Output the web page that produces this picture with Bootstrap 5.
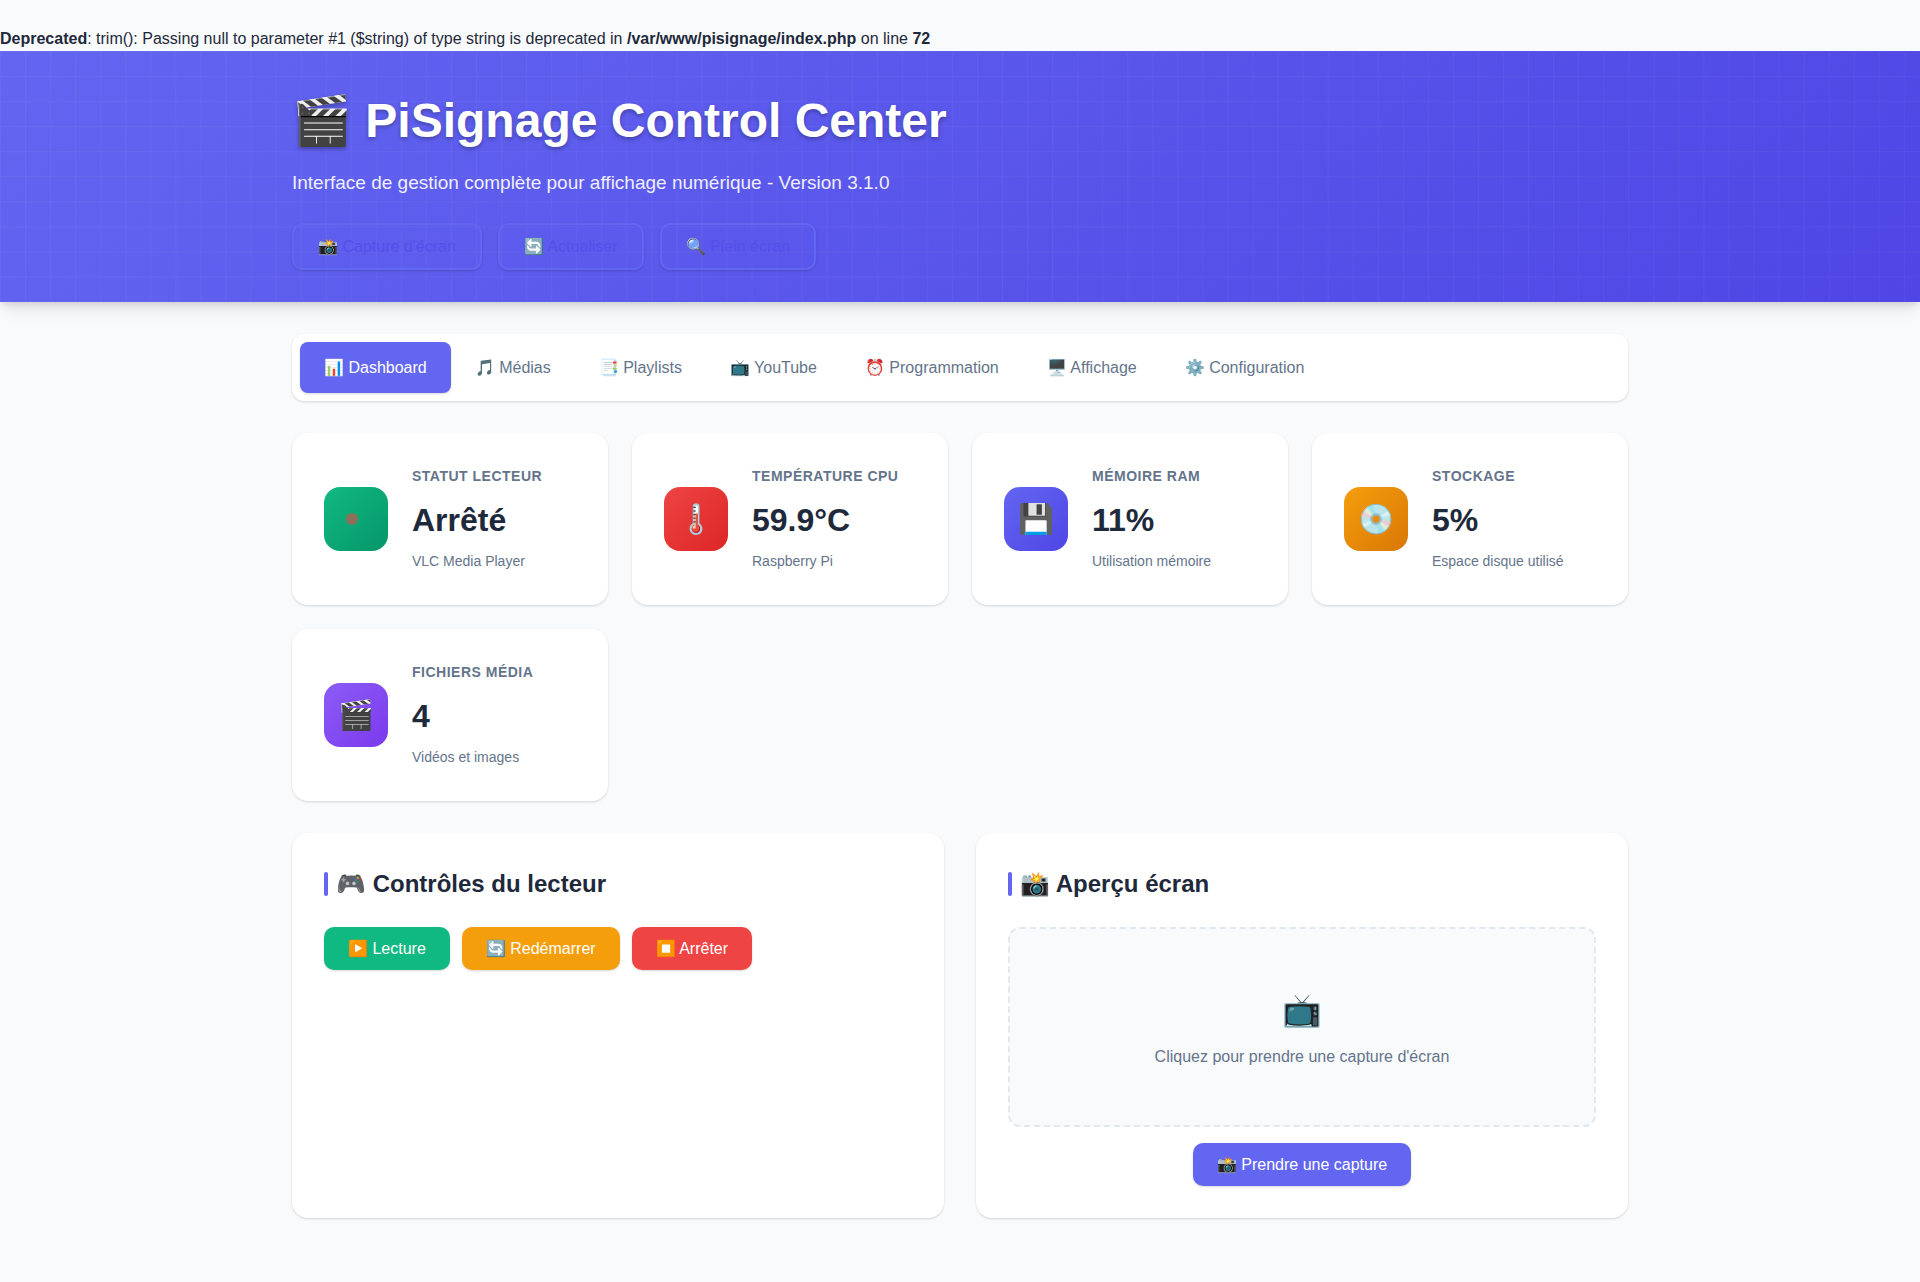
<!DOCTYPE html>
<html lang="fr">
<head>
<meta charset="utf-8">
<meta name="viewport" content="width=device-width, initial-scale=1">
<title>PiSignage Control Center</title>
<link href="https://cdn.jsdelivr.net/npm/bootstrap@5.3.0/dist/css/bootstrap.min.css" rel="stylesheet">
<style>
:root {
  --pi-primary: #6366f1;
  --pi-primary-dark: #4f46e5;
  --pi-text: #1e293b;
  --pi-muted: #64748b;
  --pi-shadow: 0 1px 3px rgba(0,0,0,.1), 0 1px 2px rgba(0,0,0,.06);
}
body { font-family: "Liberation Sans", Arial, sans-serif; font-size: 16px; line-height: 25px; color: var(--pi-text); background: #f9fafc; }
.php-notice { padding-top: 26px; }
.wrap { max-width: 1400px; padding: 0 32px; }
.site-header {
  padding: 32px 0;
  background:
    url("data:image/svg+xml,%3Csvg xmlns='http://www.w3.org/2000/svg' viewBox='0 0 200 200'%3E%3Cdefs%3E%3Cpattern id='g' width='10' height='10' patternUnits='userSpaceOnUse'%3E%3Cpath d='M10 0H0V10' fill='none' stroke='white' stroke-opacity='.04' stroke-width='.8'/%3E%3C/pattern%3E%3C/defs%3E%3Crect width='200' height='200' fill='url(%23g)'/%3E%3C/svg%3E") 0 0 / 501px,
    linear-gradient(135deg, var(--pi-primary), var(--pi-primary-dark));
  box-shadow: 0 10px 15px -3px rgba(0,0,0,.1), 0 4px 6px -2px rgba(0,0,0,.1);
}
.site-header h1 { font-size: 48px; line-height: 75px; font-weight: 700; text-shadow: 0 2px 4px rgba(0,0,0,.3); }
.tagline { font-size: 19px; line-height: 33px; opacity: .9; }
.btn { --bs-btn-padding-x: 24px; --bs-btn-padding-y: 12px; --bs-btn-border-width: 0; --bs-btn-border-radius: 10px; --bs-btn-line-height: 19px; --bs-btn-color: #fff; --bs-btn-hover-color: #fff; box-shadow: var(--pi-shadow); }
.btn-ghost { --bs-btn-border-width: 2px; --bs-btn-border-color: var(--pi-primary); --bs-btn-color: #5350e9; }
.btn-play { background: #10b981; }
.btn-restart { background: #f59e0b; }
.btn-stop { background: #ef4444; }
.btn-capture { background: var(--pi-primary); }
.main-area { padding-top: 32px; padding-bottom: 64px; }
.tabs { padding: 8px; margin-bottom: 32px; background: #fff; border-radius: 12px; box-shadow: var(--pi-shadow); }
.tabs .nav-link { padding: 16px 24px; line-height: 19px; color: var(--pi-muted); border-radius: 8px; }
.tabs .nav-link.active { color: #fff; background: var(--pi-primary); box-shadow: var(--pi-shadow); }
.panel { padding: 32px; background: #fff; border: 0; border-radius: 16px; box-shadow: var(--pi-shadow); }
.stat { flex-direction: row; align-items: center; gap: 24px; }
.stat-icon { width: 64px; height: 64px; border-radius: 16px; font-size: 29px; line-height: 46px; }
.icon-green { background: linear-gradient(135deg, #10b981, #059669); }
.icon-red { background: linear-gradient(135deg, #ef4444, #dc2626); }
.icon-indigo { background: linear-gradient(135deg, #6366f1, #4f46e5); }
.icon-amber { background: linear-gradient(135deg, #f59e0b, #d97706); }
.icon-violet { background: linear-gradient(135deg, #8b5cf6, #7c3aed); }
.status-dot { width: 12px; height: 12px; margin-right: 8px; border-radius: 50%; background: #ef4444; opacity: .57; }
.stat-label { margin-bottom: 8px; font-size: 14px; line-height: 22px; font-weight: 600; letter-spacing: .5px; text-transform: uppercase; color: var(--pi-muted); }
.stat-value { margin-bottom: 4px; font-size: 32px; line-height: 50px; font-weight: 700; }
.stat-note { font-size: 14px; line-height: 24px; color: var(--pi-muted); }
.panel-title { font-size: 24px; line-height: 38px; font-weight: 700; }
.panel-title::before { content: ""; width: 4px; height: 24px; border-radius: 2px; background: var(--pi-primary); }
.preview { min-height: 200px; border: 2px dashed #e2e8f0; border-radius: 12px; background: #f9fafc; color: var(--pi-muted); }
.preview-icon { font-size: 32px; line-height: 51px; }
.player-actions { gap: 12px; }
.stats-block { margin-bottom: 32px; }
.panels-row { --bs-gutter-x: 32px; row-gap: 32px; }
</style>
<script src="https://cdn.jsdelivr.net/npm/bootstrap@5.3.0/dist/js/bootstrap.bundle.min.js" defer></script>
</head>
<body>
<div class="php-notice"><b>Deprecated</b>: trim(): Passing null to parameter #1 ($string) of type string is deprecated in <b>/var/www/pisignage/index.php</b> on line <b>72</b></div>

<header class="site-header text-white">
  <div class="wrap mx-auto">
    <h1 class="mb-2">🎬 PiSignage Control Center</h1>
    <p class="tagline mb-4">Interface de gestion complète pour affichage numérique - Version 3.1.0</p>
    <div class="d-flex flex-wrap gap-3">
      <button type="button" class="btn btn-ghost">📸 Capture d'écran</button>
      <button type="button" class="btn btn-ghost">🔄 Actualiser</button>
      <button type="button" class="btn btn-ghost">🔍 Plein écran</button>
    </div>
  </div>
</header>

<main class="wrap main-area mx-auto">
  <nav class="tabs nav" id="main-tabs">
    <a class="nav-link active" aria-current="page" href="#dashboard">📊 Dashboard</a>
    <a class="nav-link" href="#medias">🎵 Médias</a>
    <a class="nav-link" href="#playlists">📑 Playlists</a>
    <a class="nav-link" href="#youtube">📺 YouTube</a>
    <a class="nav-link" href="#programmation">⏰ Programmation</a>
    <a class="nav-link" href="#affichage">🖥️ Affichage</a>
    <a class="nav-link" href="#configuration">⚙️ Configuration</a>
  </nav>

  <section id="dashboard">
    <div class="stats-block">
      <div class="row row-cols-1 row-cols-md-2 row-cols-xl-4 g-4">
        <div class="col"><div class="card panel stat">
          <div class="stat-icon icon-green d-flex align-items-center justify-content-center flex-shrink-0"><span class="status-dot"></span></div>
          <div><div class="stat-label">Statut lecteur</div><div class="stat-value">Arrêté</div><div class="stat-note">VLC Media Player</div></div>
        </div></div>
        <div class="col"><div class="card panel stat">
          <div class="stat-icon icon-red d-flex align-items-center justify-content-center flex-shrink-0">🌡️</div>
          <div><div class="stat-label">Température CPU</div><div class="stat-value">59.9°C</div><div class="stat-note">Raspberry Pi</div></div>
        </div></div>
        <div class="col"><div class="card panel stat">
          <div class="stat-icon icon-indigo d-flex align-items-center justify-content-center flex-shrink-0">💾</div>
          <div><div class="stat-label">Mémoire RAM</div><div class="stat-value">11%</div><div class="stat-note">Utilisation mémoire</div></div>
        </div></div>
        <div class="col"><div class="card panel stat">
          <div class="stat-icon icon-amber d-flex align-items-center justify-content-center flex-shrink-0">💿</div>
          <div><div class="stat-label">Stockage</div><div class="stat-value">5%</div><div class="stat-note">Espace disque utilisé</div></div>
        </div></div>
        <div class="col"><div class="card panel stat">
          <div class="stat-icon icon-violet d-flex align-items-center justify-content-center flex-shrink-0">🎬</div>
          <div><div class="stat-label">Fichiers média</div><div class="stat-value">4</div><div class="stat-note">Vidéos et images</div></div>
        </div></div>
      </div>
    </div>

    <div class="row row-cols-1 row-cols-lg-2 panels-row">
      <div class="col"><div class="card panel h-100">
        <h2 class="panel-title d-flex align-items-center gap-2 mb-4">🎮 Contrôles du lecteur</h2>
        <div class="player-actions d-flex flex-wrap">
          <button type="button" class="btn btn-play">▶️ Lecture</button>
          <button type="button" class="btn btn-restart">🔄 Redémarrer</button>
          <button type="button" class="btn btn-stop">⏹️ Arrêter</button>
        </div>
      </div></div>
      <div class="col"><div class="card panel h-100">
        <h2 class="panel-title d-flex align-items-center gap-2 mb-4">📸 Aperçu écran</h2>
        <div class="preview d-flex flex-column align-items-center justify-content-center gap-2">
          <div class="preview-icon">📺</div>
          <div>Cliquez pour prendre une capture d'écran</div>
        </div>
        <button type="button" class="btn btn-capture align-self-center mt-3">📸 Prendre une capture</button>
      </div></div>
    </div>
  </section>
</main>
</body>
</html>
